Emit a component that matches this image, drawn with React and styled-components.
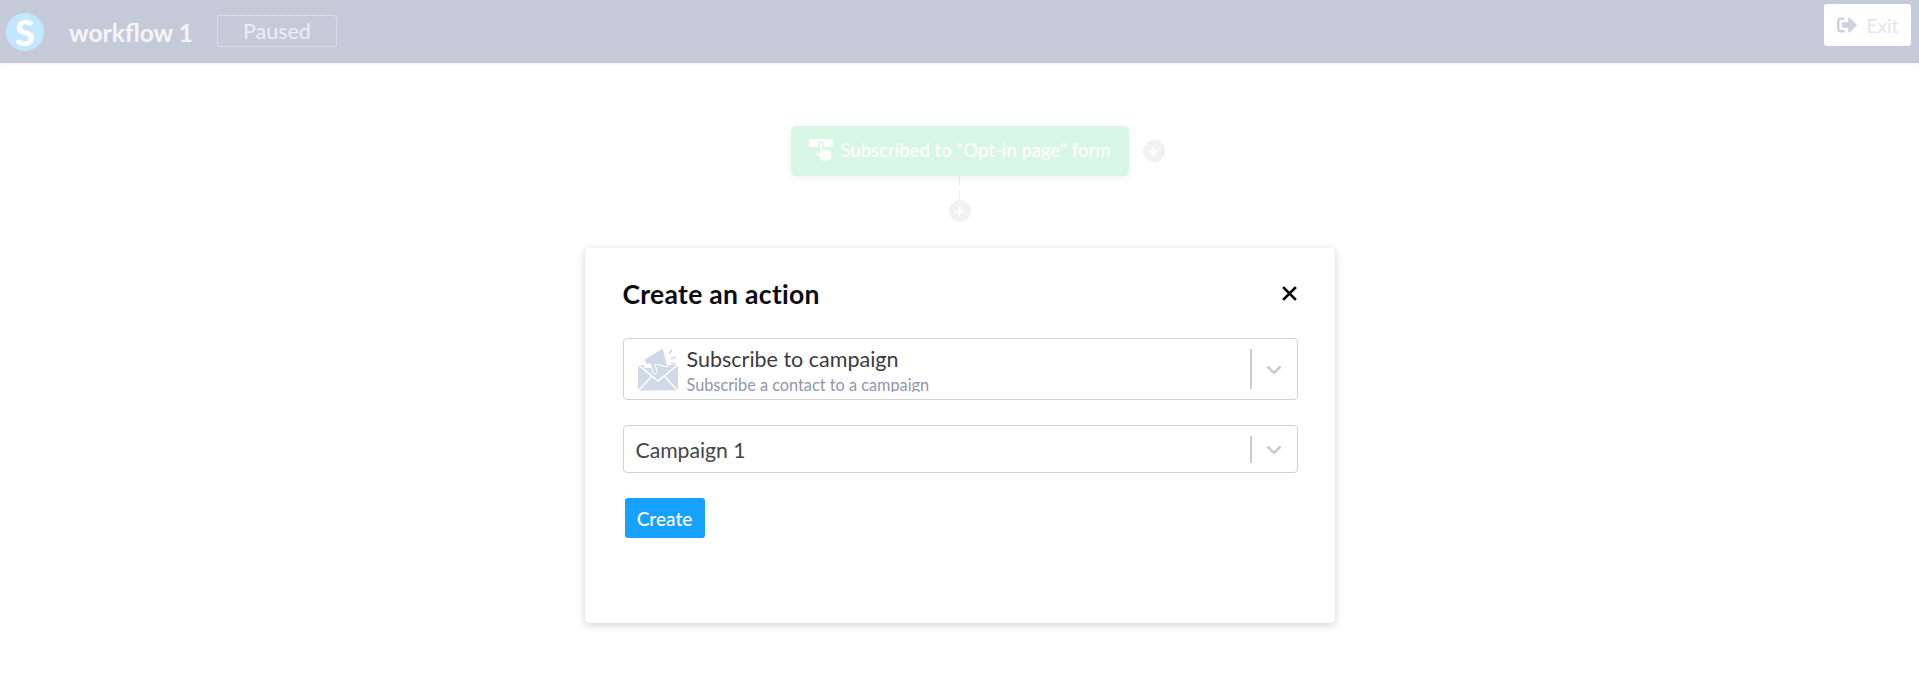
import React from 'react';
import styled, { createGlobalStyle } from 'styled-components';
import { FaSignOutAlt, FaPlus } from 'react-icons/fa';

const GlobalStyle = createGlobalStyle`
  html, body {
    margin: 0;
    padding: 0;
    background: #fff;
    font-family: 'Lato', 'Open Sans', sans-serif;
  }
  * {
    box-sizing: border-box;
  }
`;

const Page = styled.div`
  height: 696px;
  overflow: hidden;
  background: #fff;
`;

const Header = styled.header`
  display: flex;
  align-items: center;
  height: 63px;
  padding: 0 8px 0 6px;
  background: #c5cad9;
  box-shadow: 0 1px 4px rgba(60, 70, 100, 0.06);
`;

const Logo = styled.div`
  display: flex;
  align-items: center;
  justify-content: center;
  width: 38px;
  height: 38px;
  border-radius: 50%;
  background: #c3e7ff;
  color: #fff;
  font-size: 36px;
  font-weight: 900;
  line-height: 1;
`;

const WorkflowName = styled.div`
  margin: 2px 0 0 25px;
  color: #f4f5f8;
  font-size: 24.5px;
  font-weight: 700;
`;

const Status = styled.div`
  display: flex;
  align-items: center;
  justify-content: center;
  width: 120px;
  height: 32px;
  margin: -2px 0 0 24px;
  border: 1px dotted #eef0f5;
  border-radius: 3px;
  color: #eceef4;
  font-size: 21.5px;
`;

const ExitButton = styled.button`
  display: flex;
  align-items: center;
  justify-content: center;
  gap: 10px;
  width: 87px;
  height: 42px;
  margin: 4px 0 0 auto;
  align-self: flex-start;
  border: 0;
  border-radius: 3px;
  background: #fff;
  color: #e1e4ec;
  font-family: inherit;
  font-size: 19px;

  svg {
    color: #ced2df;
    font-size: 20px;
  }
`;

const Canvas = styled.main`
  display: flex;
  flex-direction: column;
  align-items: center;
  padding-top: 63px;
`;

const TriggerWrap = styled.div`
  position: relative;
`;

const Trigger = styled.div`
  display: flex;
  align-items: center;
  gap: 7px;
  width: 338px;
  height: 50px;
  padding: 0 18px 2px;
  border-radius: 5px;
  background: #d7f7e4;
  box-shadow: 0 3px 10px rgba(60, 70, 100, 0.07);
  color: #fff;
  font-size: 18.5px;
  font-weight: 500;
  white-space: nowrap;
`;

const PlusButton = styled.span`
  display: flex;
  align-items: center;
  justify-content: center;
  width: 22px;
  height: 22px;
  border-radius: 50%;
  background: #f1f1f1;
  color: #fff;
  font-size: 11px;
`;

const SidePlus = styled(PlusButton)`
  position: absolute;
  top: 14px;
  left: 352px;
`;

const Connector = styled.div`
  width: 1px;
  height: 24px;
  background: repeating-linear-gradient(#efefef 0 11px, #fff 11px 14px);
`;

const Modal = styled.section`
  width: 750px;
  height: 375px;
  margin-top: 26px;
  padding: 32px 37px 0 38px;
  border-radius: 5px;
  background: #fff;
  box-shadow: 0 2px 8px rgba(40, 45, 60, 0.22);
`;

const ModalHead = styled.div`
  display: flex;
  align-items: center;
  justify-content: space-between;
  height: 28px;
  margin-bottom: 30px;
`;

const Title = styled.h2`
  margin: 0;
  color: #0c0c10;
  font-size: 26.5px;
  font-weight: 700;
  letter-spacing: 0.3px;
`;

const Close = styled.svg`
  width: 17px;
  height: 17px;
  margin: -2px 0 0 0;
`;

const SelectBox = styled.div`
  display: flex;
  align-items: center;
  height: ${p => p.$height}px;
  margin-bottom: ${p => p.$gap}px;
  padding-left: 12px;
  overflow: hidden;
  border: 1px solid #d2d2d2;
  border-radius: 4px;
`;

const SelectValue = styled.div`
  flex: 1;
  min-width: 0;
`;

const OptionText = styled.div`
  margin-left: 8px;
`;

const OptionTitle = styled.div`
  color: #3a3b41;
  font-size: 21.5px;
  line-height: 24px;
`;

const OptionHint = styled.div`
  height: 16px;
  margin-top: 5px;
  overflow: hidden;
  color: #9096ac;
  font-size: 16.3px;
  line-height: 18px;
`;

const PlainValue = styled.div`
  margin-top: 2px;
  color: #45454a;
  font-size: 21.2px;
`;

const Divider = styled.span`
  width: 2px;
  height: ${p => p.$height}px;
  background: #cbcbcb;
`;

const Chevron = styled.svg`
  width: 16px;
  height: 10px;
  margin: 2px 15px 0 14px;
`;

const CampaignGlyph = styled.svg`
  flex: none;
  width: 41px;
  height: 43px;
  margin-left: 2px;
`;

const CreateButton = styled.button`
  display: block;
  width: 80px;
  height: 40px;
  margin-left: 2px;
  border: 0;
  border-radius: 3px;
  background: #17a2ff;
  color: #fff;
  font-family: inherit;
  font-size: 19px;
  font-weight: 500;
`;

const ChevronIcon = () => (
  <Chevron viewBox="0 0 16 10">
    <path d="M1.5 1.5 8 8l6.5-6.5" fill="none" stroke="#cbcbcb" strokeWidth="2.6" />
  </Chevron>
);

// bar with a pointing hand on it, the finger has a green ring
const TriggerIcon = () => (
  <svg width="25" height="23" viewBox="0 0 25 23">
    <path d="M0 0h25v8H0z" fill="#fff" />
    <path
      d="M10 4.500a2 2 0 0 1 4 0v5.500c3 .3 9 .8 9 3.500v4c0 3-2 5-5 5h-3c-2 0-3.200-.8-4.200-2.300L7 15.500c-1-1.800 1.200-3.300 3-2z"
      fill="#fff"
      stroke="#d7f7e4"
      strokeWidth="1.6"
    />
  </svg>
);

// envelope with a megaphone coming out of it
const CampaignIcon = () => (
  <CampaignGlyph viewBox="0 0 41 43">
    <path d="M0 17h40v25.500H0z" fill="#d0d9e6" />
    <path d="M0 16.500 20 33l20-16.500M0 43l14-15M40 43 26 28" fill="none" stroke="#fff" strokeWidth="1.5" />
    <path d="M6 8h8v12H6z" fill="#fff" />
    <path
      d="M7.500 10.500 25 0l5 19-13-2.800 2 7.300c.7 2.400-3.400 3.400-4.200 1l-2.300-8.500-2.500.4c-2.800.3-4.500-6-2.500-6.400z"
      fill="#d0d9e6"
      stroke="#fff"
      strokeWidth="1"
    />
    <path d="M31 6l3-4M33 11l5-2M33 15l5 1" stroke="#d0d9e6" strokeWidth="1.6" />
  </CampaignGlyph>
);

const App = () => (
  <Page>
    <GlobalStyle />
    <Header>
      <Logo>S</Logo>
      <WorkflowName>workflow 1</WorkflowName>
      <Status>Paused</Status>
      <ExitButton>
        <FaSignOutAlt />
        Exit
      </ExitButton>
    </Header>
    <Canvas>
      <TriggerWrap>
        <Trigger>
          <TriggerIcon />
          Subscribed to "Opt-in page" form
        </Trigger>
        <SidePlus>
          <FaPlus />
        </SidePlus>
      </TriggerWrap>
      <Connector />
      <PlusButton>
        <FaPlus />
      </PlusButton>
      <Modal>
        <ModalHead>
          <Title>Create an action</Title>
          <Close viewBox="0 0 16 16">
            <path d="M2 2l12 12M14 2 2 14" stroke="#000" strokeWidth="2.6" />
          </Close>
        </ModalHead>
        <SelectBox $height={62} $gap={25}>
          <CampaignIcon />
          <SelectValue>
            <OptionText>
              <OptionTitle>Subscribe to campaign</OptionTitle>
              <OptionHint>Subscribe a contact to a campaign</OptionHint>
            </OptionText>
          </SelectValue>
          <Divider $height={40} />
          <ChevronIcon />
        </SelectBox>
        <SelectBox $height={48} $gap={25}>
          <SelectValue>
            <PlainValue>Campaign 1</PlainValue>
          </SelectValue>
          <Divider $height={27} />
          <ChevronIcon />
        </SelectBox>
        <CreateButton>Create</CreateButton>
      </Modal>
    </Canvas>
  </Page>
);

export default App;
